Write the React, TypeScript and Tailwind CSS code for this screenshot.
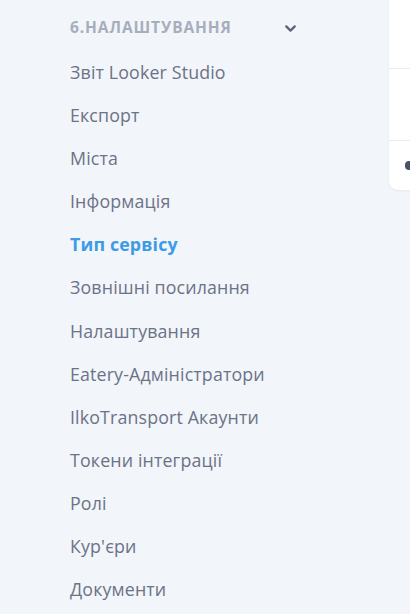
import React from 'react';

const items = [
  'Звіт Looker Studio',
  'Експорт',
  'Міста',
  'Інформація',
  'Тип сервісу',
  'Зовнішні посилання',
  'Налаштування',
  'Eatery-Адміністратори',
  'IlkoTransport Акаунти',
  'Токени інтеграції',
  'Ролі',
  "Кур'єри",
  'Документи',
];

const active = 'Тип сервісу';

const ChevronDown: React.FC = () => (
  <svg width="17" height="17" viewBox="0 0 24 24" fill="none" stroke="#5b6478" strokeWidth="3.2" strokeLinecap="round" strokeLinejoin="round">
    <path d="M6 9l6 6 6-6" />
  </svg>
);

export default function App() {
  return (
    <div className="w-[410px] h-[614px] overflow-hidden flex bg-[#f2f5fa]" style={{ fontFamily: '"Open Sans", "Noto Sans", sans-serif' }}>
      <aside className="w-[389px] shrink-0 pl-[70px] pr-[90px]">
        <div className="flex items-center justify-between h-[22px] mt-[17px]">
          <span className="text-[15.5px] font-bold tracking-[0.9px] text-[#a7aebb]">6.НАЛАШТУВАННЯ</span>
          <ChevronDown />
        </div>
        <nav className="flex flex-col mt-[21px]">
          {items.map((item) => (
            <a
              key={item}
              href="#"
              className={`h-[43.1px] leading-[24px] text-[17.8px] tracking-[0.15px] ${
                item === active ? 'font-bold text-[#3d9be6]' : 'text-[#6b7386]'
              }`}
            >
              {item}
            </a>
          ))}
        </nav>
      </aside>
      <div className="flex-1">
        <div className="bg-white rounded-bl-[9px] shadow-[0_1px_3px_rgba(0,0,0,0.06)] h-[190px] flex flex-col">
          <div className="h-[69px] border-b border-[#e9ecf1]" />
          <div className="h-[72px] border-b border-[#e9ecf1]" />
          <div className="flex-1 flex items-center pl-[16px]">
            <span className="w-[8px] h-[9px] rounded-full bg-[#4a5366]" />
          </div>
        </div>
      </div>
    </div>
  );
}
